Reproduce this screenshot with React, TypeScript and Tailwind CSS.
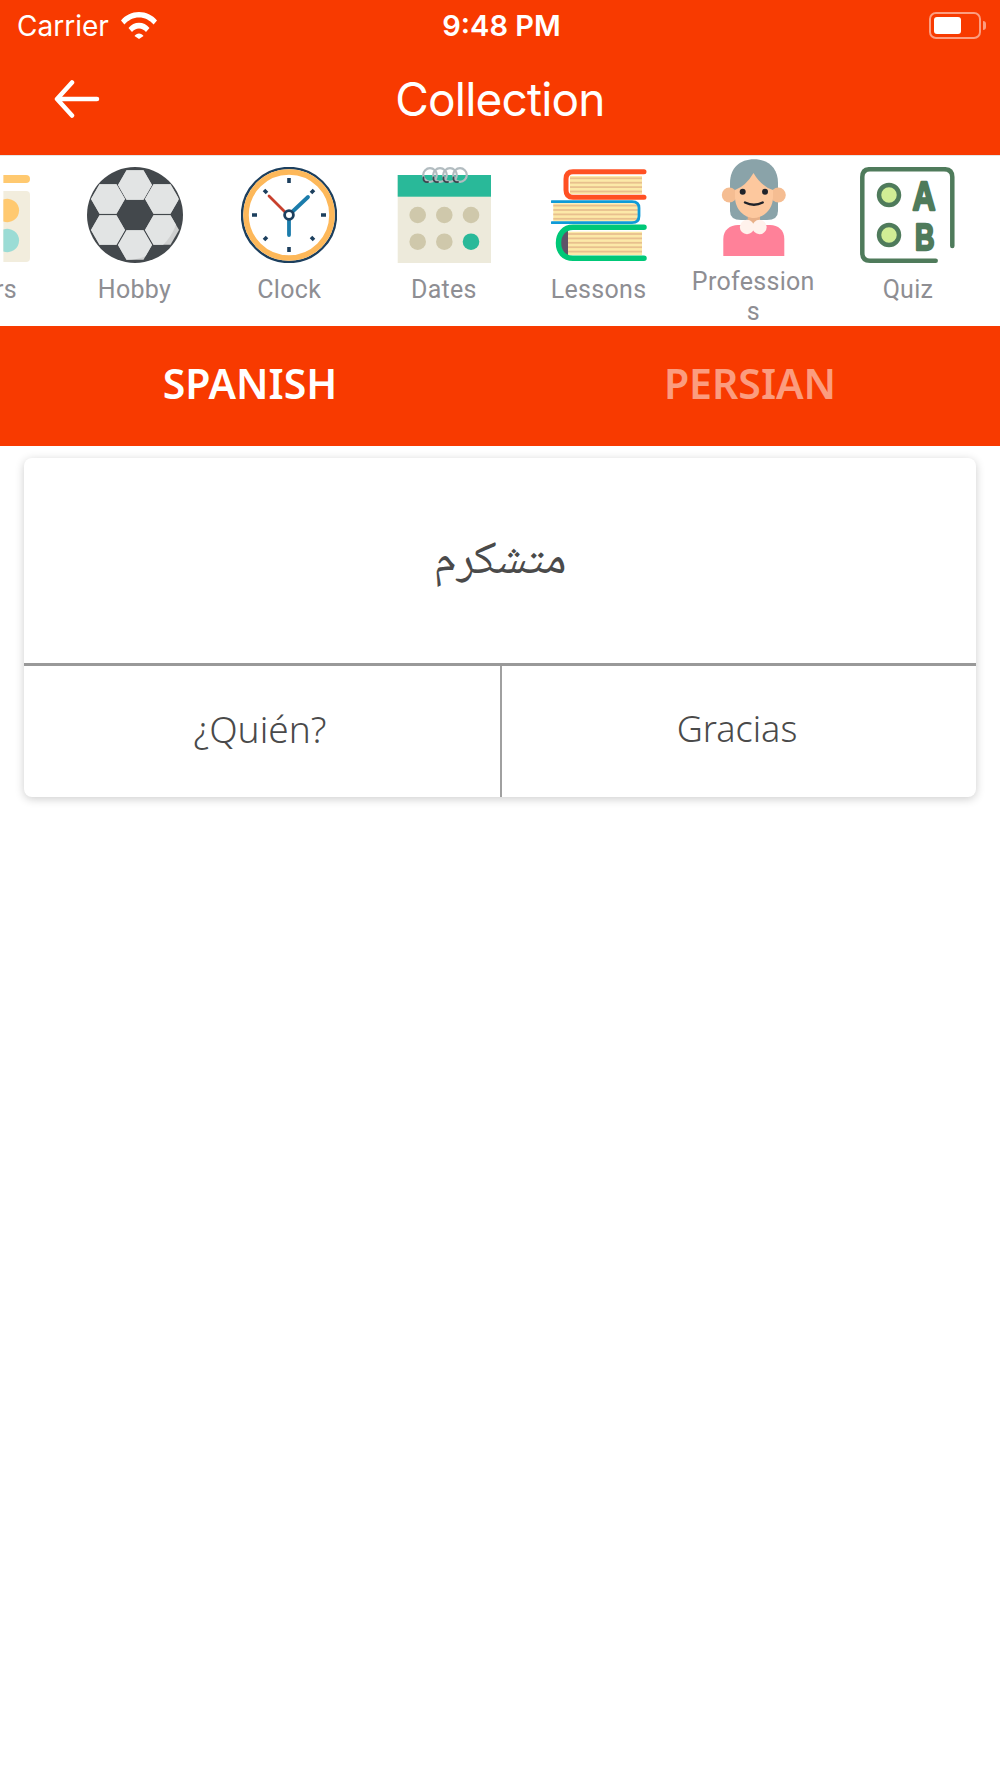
import React from 'react';

const hexPoints = (cx: number, cy: number, r = 17, h = 14.8) =>
  `${cx - r},${cy} ${cx - r / 2},${cy - h} ${cx + r / 2},${cy - h} ${cx + r},${cy} ${cx + r / 2},${cy + h} ${cx - r / 2},${cy + h}`;

const BALL_HEXES = [
  [48, 18],
  [21, 32],
  [75, 32],
  [21, 63],
  [75, 63],
  [48, 78],
];

const ColorsIcon = () => (
  <svg width="100" height="96" viewBox="0 0 100 96" className="overflow-hidden">
    <path d="M73.4 8H96a4 4 0 0 1 0 8H73.4Z" fill="#ffc970" />
    <path d="M73.4 24H96a4 4 0 0 1 4 4v63a4 4 0 0 1-4 4H73.4Z" fill="#f2eddd" />
    <path d="M73.4 32.5a11.7 11.7 0 1 1 0 22Z" fill="#ffc970" />
    <path d="M73.4 62.5a11.7 11.7 0 1 1 0 22Z" fill="#9bdcd5" />
  </svg>
);

const BallIcon = () => (
  <svg width="96" height="96" viewBox="0 0 96 96">
    <defs>
      <clipPath id="ball">
        <circle cx="48" cy="48" r="48" />
      </clipPath>
      <clipPath id="ballLight">
        <circle cx="39" cy="40" r="53" />
      </clipPath>
    </defs>
    <circle cx="48" cy="48" r="48" fill="#43484c" />
    <g clipPath="url(#ball)">
      {BALL_HEXES.map(([x, y]) => (
        <polygon key={`${x}-${y}`} points={hexPoints(x, y)} fill="#cfd0d0" />
      ))}
      <g clipPath="url(#ballLight)">
        {BALL_HEXES.map(([x, y]) => (
          <polygon key={`${x}-${y}`} points={hexPoints(x, y)} fill="#e2e4e4" />
        ))}
      </g>
    </g>
  </svg>
);

const ClockIcon = () => (
  <svg width="96" height="96" viewBox="0 0 96 96">
    <circle cx="48" cy="48" r="47" fill="#fff" stroke="#1c3f5e" strokeWidth="2.4" />
    <circle cx="48" cy="48" r="43" fill="#fff" stroke="#fdb85a" strokeWidth="5.6" />
    <g stroke="#1c3f5e" strokeWidth="3.6">
      <path d="M48 11v5M48 80v5M11 48h5M80 48h5" />
      <path d="M23 23l3 3M73 23l-3 3M23 73l3-3M73 73l-3-3" />
    </g>
    <path d="M28 29l17 17" stroke="#c8402d" strokeWidth="2.8" strokeLinecap="round" />
    <path d="M67 30L50 46M48 50v18" stroke="#1b7cab" strokeWidth="3.8" strokeLinecap="round" />
    <circle cx="48" cy="48" r="4.4" fill="#fff" stroke="#1c3f5e" strokeWidth="2.8" />
  </svg>
);

const CalendarIcon = () => (
  <svg width="96" height="96" viewBox="0 0 96 96" className="overflow-visible">
    <rect x="1.7" y="8" width="93.3" height="88" fill="#edeadb" />
    <rect x="1.7" y="8" width="93.3" height="21.7" fill="#29b999" />
    {[21.7, 48.3, 75].map((x) =>
      [48, 74.7].map((y) => (
        <circle key={`${x}-${y}`} cx={x} cy={y} r="8.3" fill={x === 75 && y === 74.7 ? '#29b999' : '#cfc8ab'} />
      ))
    )}
    {[34, 44, 54, 64].map((x) => (
      <g key={x} fill="none">
        <circle cx={x} cy="8" r="6.8" stroke="#b2bcc0" strokeWidth="2.2" />
        <path d={`M${x - 6.5} 10.5c-.6 3 1.5 5 4.5 4.500`} stroke="#3d4650" strokeWidth="1.8" strokeLinecap="round" />
      </g>
    ))}
  </svg>
);

const Pages = ({ x, y, w, h }: { x: number; y: number; w: number; h: number }) => (
  <g>
    <rect x={x} y={y} width={w} height={h} fill="#fce9a8" />
    {Array.from({ length: Math.floor(h / 4.4) }, (_, i) => (
      <rect key={i} x={x} y={y + 1.4 + i * 4.4} width={w} height="1.8" fill="#e8c08e" />
    ))}
  </g>
);

const BooksIcon = () => (
  <svg width="96" height="96" viewBox="0 0 96 96">
    <Pages x={19} y={9} w={72} h={18} />
    <path d="M93 4.7H22Q15 4.700 15 12V23Q15 30.300 22 30.300H93" fill="none" stroke="#ff5023" strokeWidth="5" strokeLinecap="round" />
    <Pages x={2.3} y={36.300} w={84.4} h={18} />
    <path d="M1 34.700H81Q88 34.700 88 41V49Q88 55.700 81 55.700H1" fill="none" stroke="#0f9bd7" strokeWidth="2.8" strokeLinecap="round" />
    <rect x="9" y="64" width="8" height="24" fill="#5e5368" />
    <Pages x={17} y={64.700} w={74} h={23.300} />
    <path d="M93 60.300H22C13 60.300 7.500 67 7.500 76S13 91.300 22 91.300H93" fill="none" stroke="#00c878" strokeWidth="5.500" strokeLinecap="round" />
  </svg>
);

const WomanIcon = () => (
  <svg width="96" height="98" viewBox="0 0 96 98">
    <path d="M25 24C25 9 35 .3 49 .3S73 9 73 24V52Q73 61 62 61H36Q25 61 25 52Z" fill="#8aa3a9" />
    <rect x="42.700" y="56" width="12.300" height="11" fill="#e8b088" />
    <circle cx="24.300" cy="36" r="7.500" fill="#f5bd92" />
    <circle cx="73.300" cy="36" r="7.500" fill="#f5bd92" />
    <path d="M18.300 97V80C18.300 71 25 66 33 66H65C73 66 79.300 71 79.300 80V97Z" fill="#ff8199" />
    <circle cx="42" cy="68" r="7.200" fill="#fff2ec" />
    <circle cx="54.500" cy="68" r="7.200" fill="#fff2ec" />
    <path d="M30 31Q41 27 48.500 14Q56 27 68 31V38C68 50 59 59 49 59S30 50 30 38Z" fill="#fdc89e" />
    <circle cx="37.700" cy="32.700" r="3" fill="#20232a" />
    <circle cx="60" cy="32.700" r="3" fill="#20232a" />
    <path d="M40 43.500Q49 48 57.700 43.500" fill="none" stroke="#20232a" strokeWidth="2.400" strokeLinecap="round" />
  </svg>
);

const QuizIcon = () => (
  <svg width="96" height="96" viewBox="0 0 96 96">
    <path d="M92.300 79V10Q92.300 2.200 84 2.200H10Q2.300 2.200 2.300 10V86Q2.300 93.700 10 93.700H75.700" fill="none" stroke="#4f7b5b" strokeWidth="4.500" strokeLinecap="round" />
    <circle cx="29" cy="28" r="10" fill="#d1ed95" stroke="#4f7b5b" strokeWidth="4.500" />
    <circle cx="29" cy="68" r="10" fill="#d1ed95" stroke="#4f7b5b" strokeWidth="4.500" />
    <text x="52.500" y="42.500" textLength="23" lengthAdjust="spacingAndGlyphs" fontFamily="Liberation Sans, sans-serif" fontWeight="700" fontSize="41" fill="#4f7b5b" stroke="#4f7b5b" strokeWidth="2.400" strokeLinejoin="round">A</text>
    <text x="55" y="82.500" textLength="19.500" lengthAdjust="spacingAndGlyphs" fontFamily="Liberation Sans, sans-serif" fontWeight="700" fontSize="36" fill="#4f7b5b" stroke="#4f7b5b" strokeWidth="2.400" strokeLinejoin="round">B</text>
  </svg>
);

const ITEMS: { label: string; icon: React.ReactNode; top: string }[] = [
  { label: 'Colors', icon: <ColorsIcon />, top: 'pt-[11px] gap-3' },
  { label: 'Hobby', icon: <BallIcon />, top: 'pt-[11px] gap-3' },
  { label: 'Clock', icon: <ClockIcon />, top: 'pt-[11px] gap-3' },
  { label: 'Dates', icon: <CalendarIcon />, top: 'pt-[11px] gap-3' },
  { label: 'Lessons', icon: <BooksIcon />, top: 'pt-[11px] gap-3' },
  { label: 'Professions', icon: <WomanIcon />, top: 'pt-[3px] gap-[10px]' },
  { label: 'Quiz', icon: <QuizIcon />, top: 'pt-[11px] gap-3' },
];

const Wifi = () => (
  <svg width="36" height="27" viewBox="0 0 36 27" fill="#fff">
    <path d="M0 8.500C4.500 3 11 0 18 0S31.500 3 36 8.500L32.600 12.500C28.800 8 23.600 5.400 18 5.400S7.200 8 3.400 12.500Z" />
    <path d="M7.500 16C10.200 12.600 14 10.800 18 10.800S25.800 12.600 28.500 16L25 20C23.200 17.800 20.700 16.400 18 16.400S12.800 17.800 11 20Z" />
    <path d="M13.500 24C14.500 22.500 16.200 21.600 18 21.600S21.500 22.500 22.500 24L18 27Z" />
  </svg>
);

const Battery = () => (
  <div className="flex items-center gap-[2px]">
    <div className="flex h-[27px] w-[52px] items-center rounded-[7px] border-2 border-white/50 p-[3px]">
      <div className="h-full w-[27px] rounded-[3px] bg-white" />
    </div>
    <div className="h-[9px] w-[3px] rounded-r-full bg-white/50" />
  </div>
);

export default function App() {
  return (
    <div className="flex min-h-[1778px] w-[1000px] flex-col overflow-hidden bg-white font-['Noto_Sans',sans-serif]">
      <header className="h-[156px] shrink-0 border-b border-[#e5e5e5] bg-[#f83a00] text-white">
        <div className="grid h-[50px] grid-cols-[1fr_auto_1fr] items-center pl-[17px] pr-[14px] pt-[1px] font-['Inter',sans-serif] text-[28px]">
          <div className="flex items-center gap-[12px]">
            <span>Carrier</span>
            <Wifi />
          </div>
          <span className="text-[29px] font-semibold">9:48 PM</span>
          <div className="flex justify-end">
            <Battery />
          </div>
        </div>
        <div className="grid h-[100px] grid-cols-[1fr_auto_1fr] items-center pb-[2px] pl-[54px]">
          <svg width="46" height="38" viewBox="0 0 46 38" fill="none" stroke="#fff" strokeWidth="4.500" strokeLinecap="round" strokeLinejoin="round">
            <path d="M43 19H4M18 2.500L3 19l15 16.500" />
          </svg>
          <h1 className="-ml-[54px] font-['Inter',sans-serif] text-[46px] font-normal tracking-[-0.8px]">Collection</h1>
        </div>
      </header>

      <div className="flex h-[170px] shrink-0 overflow-hidden">
        <div className="-ml-[97.5px] flex">
          {ITEMS.map((item) => (
            <div key={item.label} className={`flex w-[154.7px] shrink-0 flex-col items-center ${item.top}`}>
              <div className="flex shrink-0">{item.icon}</div>
              <span className="w-[124px] shrink-0 break-all text-center font-['Roboto',sans-serif] text-[25px] leading-[30px] tracking-[0.3px] text-[#8e8e93]">
                {item.label}
              </span>
            </div>
          ))}
        </div>
      </div>

      <nav className="grid h-[120px] shrink-0 grid-cols-2 items-center bg-[#f83a00] pb-[4px] text-center text-[41px] font-semibold">
        <span className="text-white">SPANISH</span>
        <span className="text-white/50">PERSIAN</span>
      </nav>

      <section className="mx-6 mt-3 overflow-hidden rounded-lg bg-white shadow-[0_2px_10px_rgba(0,0,0,0.2)]">
        <div dir="rtl" className="flex h-[208px] items-center justify-center border-b-[3px] border-[#999] pt-[5px] font-['Noto_Naskh_Arabic','Noto_Sans_Arabic',serif] text-[47px] text-[#4a4a4a]">
          متشكرم
        </div>
        <div className="grid h-[131px] grid-cols-[476px_1fr] text-[36px] font-light text-[#4a4a4a]">
          <div className="flex items-center justify-center pb-[6px] pr-[4px] text-[37px]">¿Quién?</div>
          <div className="flex items-center justify-center border-l-2 border-[#a0a0a0] pb-[6px] pr-[4px]">Gracias</div>
        </div>
      </section>
    </div>
  );
}
